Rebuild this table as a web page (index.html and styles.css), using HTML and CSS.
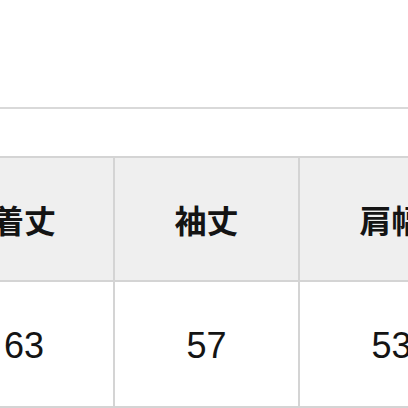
FILE: index.html
```html
<!DOCTYPE html>
<html lang="ja">
<head>
<meta charset="utf-8">
<link rel="stylesheet" href="styles.css">
</head>
<body>
<div class="rule"></div>
<div class="size-table">
  <div class="cell head">着丈</div>
  <div class="cell head">袖丈</div>
  <div class="cell head">肩幅</div>
  <div class="cell num">63</div>
  <div class="cell num">57</div>
  <div class="cell num">53</div>
</div>
</body>
</html>
```
FILE: styles.css
```css
html, body {
  margin: 0;
  padding: 0;
  background: #ffffff;
  overflow: hidden;
  width: 408px;
  height: 408px;
}
.rule {
  margin-top: 107px;
  height: 2px;
  background: #d9d9d9;
}
.size-table {
  margin-top: 47px;
  margin-left: -65px;
  width: 560px;
  display: grid;
  grid-template-columns: 178px 183px 183px;
  grid-template-rows: 122px 124px;
  gap: 2px;
  padding: 2px 0;
  background: #d4d4d4;
}
.cell {
  display: flex;
  align-items: center;
  justify-content: center;
  color: #141414;
}
.head {
  background: #efefef;
  font-family: "Noto Sans CJK JP", sans-serif;
  font-weight: 700;
  font-size: 32px;
}
.num {
  background: #ffffff;
  font-family: "Liberation Sans", Arial, sans-serif;
  font-size: 36px;
  padding-top: 4px;
}
```
